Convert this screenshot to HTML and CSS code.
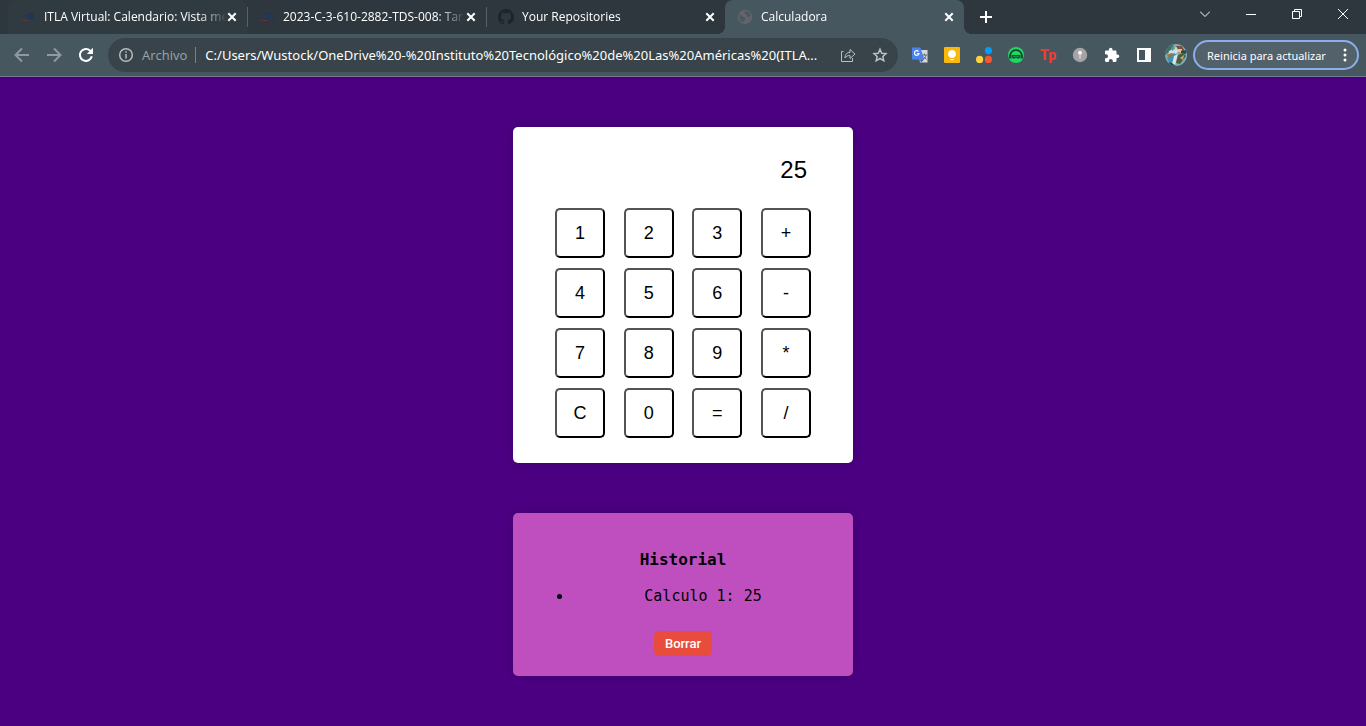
FILE: index.html
```html
<!DOCTYPE html>
<html lang="es">
<head>
<meta charset="utf-8">
<title>Calculadora</title>
<link rel="stylesheet" href="styles.css">
</head>
<body>
<header class="browser">
  <div class="tabstrip">
    <nav class="tabs" aria-label="Pestañas">
      <div class="tab first">
        <svg class="favicon" viewBox="0 0 16 16"><path d="M7 6c2-3 6-3 7 0v4H8z" fill="#1f3350"/><path d="M3 7h4M9 5v6M12 5v6" stroke="#223a5a" stroke-width="2"/><path d="M1 12c2-1 4-1 7-1v1z" fill="#7c2c38"/></svg>
        <a class="tab-title" href="#">ITLA Virtual: Calendario: Vista me</a>
        <button class="close" aria-label="Cerrar pestaña"><svg viewBox="0 0 10 10"><path d="M1.300 1.300l7.400 7.400M8.700 1.300l-7.400 7.400"/></svg></button>
      </div>
      <div class="tab">
        <svg class="favicon" viewBox="0 0 16 16"><path d="M7 6c2-3 6-3 7 0v4H8z" fill="#1f3350"/><path d="M3 7h4M9 5v6M12 5v6" stroke="#223a5a" stroke-width="2"/><path d="M1 12c2-1 4-1 7-1v1z" fill="#7c2c38"/></svg>
        <a class="tab-title" href="#">2023-C-3-610-2882-TDS-008: Tar</a>
        <button class="close" aria-label="Cerrar pestaña"><svg viewBox="0 0 10 10"><path d="M1.300 1.300l7.400 7.400M8.700 1.300l-7.400 7.400"/></svg></button>
      </div>
      <div class="tab">
        <svg class="favicon" viewBox="0 0 16 16"><path fill="#1e2429" d="M8 0a8 8 0 0 0-2.500 15.600c.4.070.550-.170.550-.380v-1.500c-2.200.480-2.700-.940-2.700-.940-.360-.920-.890-1.170-.890-1.170-.730-.500.050-.490.050-.490.800.060 1.230.830 1.230.830.720 1.220 1.870.870 2.330.660.070-.520.280-.870.500-1.070-1.770-.200-3.640-.890-3.640-3.950 0-.870.310-1.590.820-2.150-.080-.200-.360-1.020.080-2.120 0 0 .670-.210 2.200.820a7.600 7.600 0 0 1 4 0c1.530-1.040 2.200-.820 2.200-.820.440 1.100.160 1.920.080 2.120.510.560.820 1.270.820 2.150 0 3.070-1.870 3.750-3.650 3.950.290.250.540.730.540 1.480v2.200c0 .210.150.460.550.380A8 8 0 0 0 8 0"/></svg>
        <a class="tab-title" href="#">Your Repositories</a>
        <button class="close" aria-label="Cerrar pestaña"><svg viewBox="0 0 10 10"><path d="M1.300 1.300l7.400 7.400M8.700 1.300l-7.400 7.400"/></svg></button>
      </div>
      <div class="tab active">
        <svg class="favicon" viewBox="0 0 16 16"><circle cx="8" cy="8" r="7.200" fill="#626469"/><path d="M2.500 5.500c2 0 2 1 3 2s3 .5 3 2-1.500 1.500-2 3.500c-3 0-5-3-4-7.500zM8 2.500c2-1 5 1 5.500 4-1 .5-1 2-2.500 1.500s-.5-2-2-2.500-2-2-1-3z" fill="#4b575e"/></svg>
        <a class="tab-title" href="#">Calculadora</a>
        <button class="close" aria-label="Cerrar pestaña"><svg viewBox="0 0 10 10"><path d="M1.300 1.300l7.400 7.400M8.700 1.300l-7.400 7.400"/></svg></button>
      </div>
      <button class="new-tab" aria-label="Nueva pestaña"><svg viewBox="0 0 12 12"><path d="M6 0v12M0 6h12"/></svg></button>
    </nav>
    <div class="window-controls">
      <button aria-label="Buscar pestañas"><svg viewBox="0 0 10 10"><path d="M0 2.500l5 5 5-5"/></svg></button>
      <button aria-label="Minimizar"><svg viewBox="0 0 10 10"><path d="M0 5.500h10"/></svg></button>
      <button aria-label="Restaurar"><svg viewBox="0 0 10 10"><path d="M.5 2.500h7v7h-7zM2.500 2.500v-2h7v7h-2"/></svg></button>
      <button aria-label="Cerrar"><svg viewBox="0 0 10 10"><path d="M0 0l10 10M10 0L0 10"/></svg></button>
    </div>
  </div>
  <div class="toolbar">
    <div class="nav-buttons">
      <button class="icon dim" aria-label="Atrás"><svg viewBox="0 0 16 16"><path d="M15 8H2M8 1.500L1.500 8 8 14.500"/></svg></button>
      <button class="icon dim" aria-label="Adelante"><svg viewBox="0 0 16 16"><path d="M1 8h13M8 1.500L14.500 8 8 14.500"/></svg></button>
      <button class="icon reload" aria-label="Recargar"><svg viewBox="0 0 16 16"><path d="M13.800 9.200a6 6 0 1 1-1.600-5.500L14 5.500"/><path d="M15 .8V7H8.800z" fill="#fff" stroke="none"/></svg></button>
    </div>
    <div class="address">
      <svg class="info" viewBox="0 0 16 16"><circle cx="8" cy="8" r="6.300"/><path d="M8 7v4.500M8 4.200v1.600"/></svg>
      <label class="scheme" for="url">Archivo</label>
      <input id="url" class="url" type="text" value="C:/Users/Wustock/OneDrive%20-%20Instituto%20Tecnológico%20de%20Las%20Américas%20(ITLA...">
      <button class="icon share" aria-label="Compartir"><svg viewBox="0 0 16 16"><path d="M3.500 4.500H1.500v10h11V11M5 11c0-4 2-5.500 5-5.500V2.500l5 4.500-5 4.500v-3C8 8.500 6 9 5 11z"/></svg></button>
      <button class="icon star" aria-label="Favorito"><svg viewBox="0 0 16 16"><path d="M8 2.200l1.700 4 4.300.4-3.200 2.900 1 4.300L8 11.500l-3.800 2.300 1-4.300L2 6.600l4.300-.4z"/></svg></button>
    </div>
    <div class="extensions">
      <button class="icon" aria-label="Traductor"><svg viewBox="0 0 16 16"><path d="M6 3h9.500v12.500H8z" fill="#d5d9dc"/><path d="M0 .5h8.500l3.500 12H0z" fill="#4a83ee"/><path d="M8 12.500h4l-3 3z" fill="#3158a8"/><path d="M6.500 4.500A2.300 2.300 0 1 0 7 6.500H5" fill="none" stroke="#fff" stroke-width="1.200"/><path d="M10 8h5M12.500 6.500V8M14 8c0 2-2 4-3 4.500M11.500 9.500l3 3" fill="none" stroke="#596b78"/></svg></button>
      <button class="icon" aria-label="Notas"><svg viewBox="0 0 16 16"><rect width="16" height="16" rx="1" fill="#f9b90a"/><path d="M8 3a4 4 0 0 0-2 7.400V11h4v-.6A4 4 0 0 0 8 3zM6.300 12h3.400v1.200H6.300z" fill="#fff"/></svg></button>
      <button class="icon" aria-label="Puntos de color"><svg viewBox="0 0 16 16"><circle cx="12.500" cy="3.600" r="3.600" fill="#079cf5"/><circle cx="3.600" cy="12.400" r="3.600" fill="#ffd13e"/><circle cx="12.400" cy="12.400" r="3.600" fill="#fa552f"/></svg></button>
      <button class="icon" aria-label="Auriculares"><svg viewBox="0 0 16 16"><circle cx="8" cy="8" r="8" fill="#1ed760"/><path d="M2 9a6 6 0 0 1 12 0" fill="none" stroke="#16382b" stroke-width="1.500"/><path d="M1 7.500h2.500v4H1zM12.500 7.500H15v4h-2.500zM4 8h8v3l-2 .8-2-1-2 1L4 11z" fill="#17513a"/><path d="M5.500 9.500h2M8.500 9.500h2" stroke="#25a65a"/></svg></button>
      <button class="icon tp" aria-label="TP">Tp</button>
      <button class="icon" aria-label="Información"><svg viewBox="0 0 16 16"><circle cx="8" cy="8" r="7.200" fill="#a5a5a5"/><circle cx="8" cy="5.800" r="2" fill="#f4f4f4"/><path d="M8 7v4.500" stroke="#e1e1e1" stroke-width="1.200"/></svg></button>
      <button class="icon" aria-label="Extensiones"><svg viewBox="0 0 16 16"><path fill="#fff" d="M13.500 7.500h-1V4.700c0-.7-.5-1.200-1.200-1.200H8.500v-1a1.800 1.800 0 0 0-3.600 0v1H2.200C1.500 3.500 1 4 1 4.700v2.600h1a2 2 0 0 1 0 4H1v2.500c0 .7.5 1.200 1.200 1.200h2.600v-1a2 2 0 0 1 4 0v1h2.500c.7 0 1.200-.5 1.200-1.200v-2.700h1a1.800 1.800 0 0 0 0-3.600z"/></svg></button>
      <button class="icon" aria-label="Panel lateral"><svg viewBox="0 0 16 16"><path fill="#fff" fill-rule="evenodd" d="M1 1h14v14H1zM3 3v10h6V3z"/></svg></button>
      <button class="icon profile" aria-label="Perfil"><svg viewBox="0 0 22 22"><defs><clipPath id="avatar"><circle cx="11" cy="11" r="11"/></clipPath></defs><g clip-path="url(#avatar)"><path fill="#7eabba" d="M0 0h22v22H0z"/><path fill="#416f62" d="M0 4l9-4-3 7-6 4z"/><path fill="#c9dfe2" d="M4 7l9-5 2 4-9 9-3-2z"/><path fill="#7d5334" d="M11 2l6 0 3 6-6 1-1-3z"/><path fill="#e8c094" d="M13 5h4l-1 4-3-1z"/><path fill="#3d91bc" d="M2 14l7-5 3 2-7 10z"/><path fill="#d6e8e6" d="M9 12l4-2-3 11H7z"/><path fill="#4e5e3c" d="M13 11l5-2 3 3-6 8-4-1z"/><path fill="#8c7a4c" d="M2 11l4-2 3 1-5 5z"/><path fill="#c5a66c" d="M15 14l4-3-1 5z"/><path fill="#5f9b8d" d="M6 4l3-2 1 3-3 2z"/><path fill="#244b48" d="M16 7l6-1-1 4-5-1zM4 18l3 1 4 3H5z"/></g></svg></button>
    </div>
    <button class="update">Reinicia para actualizar<svg viewBox="0 0 4 16"><circle cx="2" cy="3" r="1.500"/><circle cx="2" cy="8" r="1.500"/><circle cx="2" cy="13" r="1.500"/></svg></button>
  </div>
</header>
<main class="page">
  <section class="calculator" aria-label="Calculadora">
    <input class="display" type="text" value="25" aria-label="Resultado" readonly>
    <div class="keypad">
      <button>1</button><button>2</button><button>3</button><button>+</button>
      <button>4</button><button>5</button><button>6</button><button>-</button>
      <button>7</button><button>8</button><button>9</button><button>*</button>
      <button>C</button><button>0</button><button>=</button><button>/</button>
    </div>
  </section>
  <section class="history">
    <h2>Historial</h2>
    <ul><li>Calculo 1: 25</li></ul>
    <button class="clear">Borrar</button>
  </section>
</main>
</body>
</html>
```
FILE: styles.css
```css
* { box-sizing: border-box; }

body {
  margin: 0;
  min-height: 100vh;
  display: flex;
  flex-direction: column;
  background: #4b0082;
  font-family: "Open Sans", "Noto Sans", sans-serif;
}

button, input { font: inherit; }

.browser button {
  display: flex;
  align-items: center;
  justify-content: center;
  padding: 0;
  border: 0;
  background: none;
  color: #fff;
}

.browser { border-bottom: 1px solid #75798f; }

.tabstrip {
  display: flex;
  justify-content: space-between;
  height: 34px;
  background: #2d373d;
}

.tabs {
  display: flex;
  flex: 1;
  min-width: 0;
  padding-left: 8px;
}

.tab {
  position: relative;
  display: flex;
  align-items: center;
  flex: 0 1 239px;
  min-width: 0;
  padding: 0 10px 0 12px;
}

.tab.first { background: #303b41; border-radius: 8px 8px 0 0; }

.tab:nth-child(-n+2)::after {
  content: "";
  position: absolute;
  right: -1px;
  top: 7px;
  width: 1px;
  height: 20px;
  background: #566269;
}

.tab.active {
  background: #465760;
  border-radius: 8px 8px 0 0;
}

.tab.active::before, .tab.active::after {
  content: "";
  position: absolute;
  bottom: 0;
  width: 8px;
  height: 8px;
}

.tab.active::before {
  left: -8px;
  background: radial-gradient(circle at 0 0, transparent 8px, #465760 8px);
}

.tab.active::after {
  right: -8px;
  background: radial-gradient(circle at 100% 0, transparent 8px, #465760 8px);
}

.favicon { flex: none; width: 16px; height: 16px; margin-right: 8px; fill: none; }

.tab-title {
  flex: 1;
  min-width: 0;
  overflow: hidden;
  white-space: nowrap;
  color: #fff;
  font-size: 12px;
  line-height: 16px;
  text-decoration: none;
  -webkit-mask-image: linear-gradient(to left, transparent, #000 28px);
  mask-image: linear-gradient(to left, transparent, #000 28px);
}

.close svg, .window-controls svg {
  width: 10px;
  height: 10px;
  fill: none;
  stroke: #fff;
}

.close svg { stroke-width: 2; }

.browser .new-tab { width: 44px; }
.new-tab svg { width: 12px; height: 12px; stroke: #fff; stroke-width: 2; }

.window-controls { display: flex; height: 28px; }
.browser .window-controls button { width: 46px; }

.toolbar {
  display: flex;
  align-items: center;
  height: 42px;
  padding: 0 7px 0 6px;
  background: #465760;
}

.nav-buttons, .extensions { display: flex; }

.browser .icon { flex: none; width: 32px; height: 32px; }
.icon svg { width: 16px; height: 16px; }
.browser .dim svg { fill: none; stroke: #8e9aa0; stroke-width: 2; }
.browser .reload svg { fill: none; stroke: #fff; stroke-width: 2; }

.address {
  display: flex;
  align-items: center;
  flex: 1;
  min-width: 0;
  height: 34px;
  margin: 0 6px;
  padding: 0 2px 0 10px;
  border-radius: 17px;
  background: #38444a;
}

.info { flex: none; width: 16px; height: 16px; fill: none; stroke: #b5bcc0; stroke-width: 1.5; }

.scheme {
  margin: 0 8px;
  color: #9ba5aa;
  font-size: 13px;
}

.url {
  flex: 1;
  min-width: 0;
  height: 16px;
  padding: 0 0 0 9px;
  border: 0;
  border-left: 1px solid #77838a;
  background: none;
  color: #fff;
  font-family: "Noto Sans", sans-serif;
  font-size: 13px;
  outline: 0;
}

.share svg, .star svg { fill: none; stroke: #b9c0c4; }
.star svg { stroke-width: 1.5; }

.browser .tp {
  color: #ee3b36;
  font-family: Roboto, sans-serif;
  font-size: 14px;
  font-weight: 900;
}

.profile svg { width: 22px; height: 22px; }

.browser .update {
  flex: none;
  justify-content: space-between;
  width: 166px;
  height: 30px;
  margin-left: 1px;
  padding: 0 10px 0 12px;
  border: 2px solid #8ab0ed;
  border-radius: 15px;
  background: #52616a;
  font-family: "Noto Sans", sans-serif;
  font-size: 11px;
  white-space: nowrap;
}

.update svg { width: 4px; height: 16px; fill: #fff; }

.page {
  display: flex;
  flex-direction: column;
  align-items: center;
  gap: 50px;
  padding: 50px 16px;
}

.calculator, .history {
  width: 100%;
  max-width: 340px;
  border-radius: 5px;
  box-shadow: 0 0 10px rgba(0, 0, 0, 0.2);
}

.calculator {
  padding: 21px 42px 25px;
  background: #fff;
}

.display {
  display: block;
  width: 100%;
  height: 44px;
  margin-bottom: 16px;
  padding: 0 4px;
  border: 0;
  background: none;
  color: #000;
  font: 24px "Liberation Sans", Arial, sans-serif;
  text-align: right;
  outline: 0;
}

.keypad {
  display: grid;
  grid-template-columns: repeat(4, 50px);
  justify-content: space-between;
  gap: 10px 0;
}

.keypad button {
  height: 50px;
  padding: 0;
  border: 2px outset #000;
  border-radius: 5px;
  background: #fff;
  color: #000;
  font: 18px "Liberation Sans", Arial, sans-serif;
}

.history {
  display: flex;
  flex-direction: column;
  align-items: center;
  padding: 37px 20px 20px;
  background: #bf4fbf;
  color: #000;
  font-family: "DejaVu Sans Mono", Consolas, monospace;
}

.history h2 {
  margin: 0 0 15px;
  font-size: 16px;
  line-height: 20px;
}

.history ul {
  align-self: stretch;
  margin: 0 0 24px;
  padding-left: 40px;
  font-size: 15px;
  line-height: 22px;
  text-align: center;
}

.clear {
  padding: 0 11px;
  border: 0;
  border-radius: 5px;
  background: #e74c3c;
  color: #fff;
  font: 500 13px/25px Roboto, sans-serif;
}
```
